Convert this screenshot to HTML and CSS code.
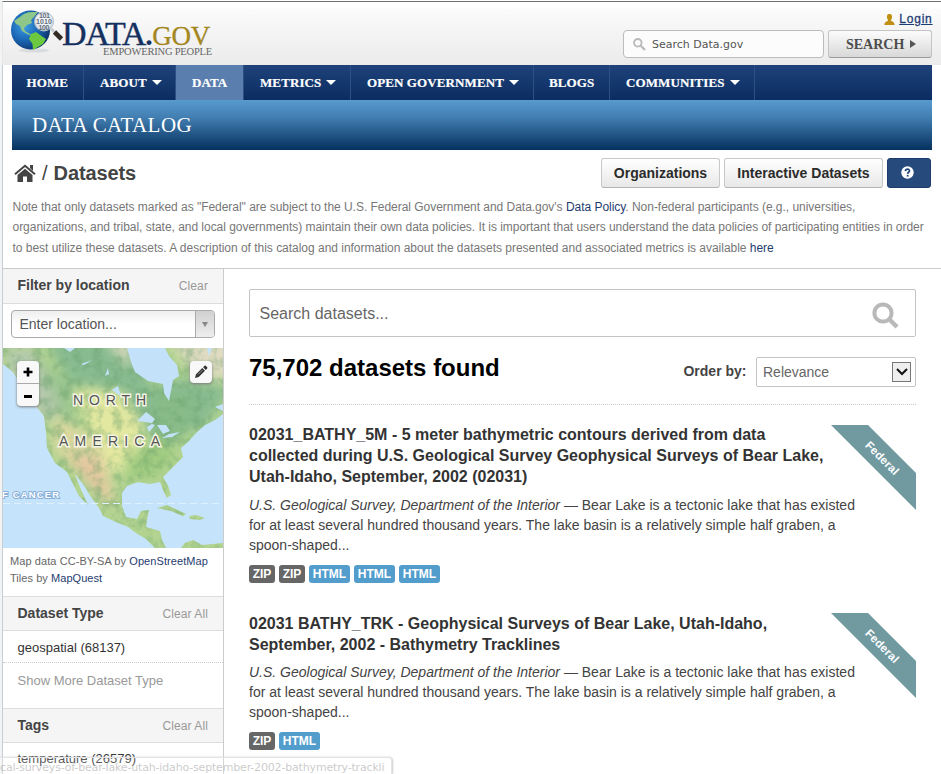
FILE: index.html
```html
<!DOCTYPE html>
<html lang="en">
<head>
<meta charset="utf-8">
<title>Data.gov - Datasets</title>
<link rel="stylesheet" href="styles.css">
</head>
<body>
<div class="page">
  <header class="masthead">
    <div class="logo">
      <svg class="globe" width="54" height="48" viewBox="0 0 54 48">
        <defs>
          <radialGradient id="sea" cx=".35" cy=".4" r=".7"><stop offset="0" stop-color="#3f9fe0"/><stop offset=".5" stop-color="#1b69b8"/><stop offset="1" stop-color="#0a2f63"/></radialGradient>
          <radialGradient id="lens" cx=".5" cy=".45" r=".6"><stop offset="0" stop-color="#ffffff"/><stop offset=".7" stop-color="#e3eaf0"/><stop offset="1" stop-color="#aebbc8"/></radialGradient>
        </defs>
        <ellipse cx="24" cy="41.500" rx="15" ry="2" fill="#d9dcdf"/>
        <circle cx="20.500" cy="21" r="19.500" fill="url(#sea)"/>
        <path d="M10 8 Q15 3 22 3 L28 3 L24 8 L21 11 L22 14 L17 16 L14 19 L15 22 L20 25 L22 27 L17 25 L12 22 L10 17 L6 15 L4 12 Z" fill="#8fc78a"/>
        <path d="M21 25 L26 23 L33 28 L36 30 L33 35 L28 38 L23 41 L22.500 35 L19 30 Z" fill="#6cc83e"/>
        <circle cx="34" cy="12.500" r="9.500" fill="url(#lens)" stroke="#b4bec8" stroke-width="1"/>
        <text x="29" y="8.500" class="bits" textLength="11">101</text><text x="26" y="14.800" class="bits" textLength="16">1010</text><text x="28.500" y="21" class="bits" textLength="11">100</text>
        <path d="M41 19.500 L45 23.500" stroke="#c9ced3" stroke-width="2.500"/>
        <path d="M44.500 23 L51.500 30" stroke="#332c27" stroke-width="4.600"/>
      </svg>
      <div class="wordmark">
        <div class="brand"><span class="brand-data">DATA</span><span class="brand-gov"><b>.</b>GOV</span></div>
        <div class="tagline">EMPOWERING PEOPLE</div>
      </div>
    </div>
    <div class="tools">
      <div class="login"><svg width="11" height="11" viewBox="0 0 11 11"><path d="M5.500 0C8 0 8.200 2 8 3.800 7.800 5.200 7 5.700 7 6.300 7 7.500 10.600 7.300 10.600 11H.4C.4 7.300 4 7.500 4 6.300 4 5.700 3.200 5.200 3 3.800 2.800 2 3 0 5.500 0Z" fill="#c09012"/></svg><a href="#">Login</a></div>
      <div class="site-search">
        <div class="site-input"><svg width="13" height="13" viewBox="0 0 13 13"><circle cx="4.800" cy="4.800" r="3.800" fill="none" stroke="#b9b9b9" stroke-width="1.800"/><path d="M7.800 7.800 L12 12" stroke="#b9b9b9" stroke-width="2.200"/></svg><span>Search Data.gov</span></div>
        <div class="site-button"><span>SEARCH</span><i></i></div>
      </div>
    </div>
  </header>
  <nav class="nav">
    <div class="item home"><span>HOME</span></div>
    <div class="item about"><span>ABOUT</span><i></i></div>
    <div class="item active"><span>DATA</span></div>
    <div class="item metrics"><span>METRICS</span><i></i></div>
    <div class="item open"><span>OPEN GOVERNMENT</span><i></i></div>
    <div class="item blogs"><span>BLOGS</span></div>
    <div class="item comm"><span>COMMUNITIES</span><i></i></div>
  </nav>
  <div class="banner"><span>DATA CATALOG</span></div>
  <div class="toolbar">
    <svg class="house" width="22" height="18" viewBox="0 0 22 18"><path d="M16 1h3v6l-3-3Z M11 4.800 18.500 11v7H13v-5.500H9V18H3.500v-7Z" fill="#444"/><path d="M1 10.200 11 1.800 21 10.200" fill="none" stroke="#444" stroke-width="2"/></svg>
    <span class="slash">/</span><span class="crumb">Datasets</span>
    <div class="actions">
      <a class="btn orgs">Organizations</a><a class="btn inter">Interactive Datasets</a><a class="btn help"><svg width="13" height="13" viewBox="0 0 13 13"><circle cx="6.500" cy="6.500" r="6.200" fill="#fff"/><path d="M4.400 5.100C4.500 2.300 8.700 2.500 8.500 4.900 8.400 6.300 6.700 6.200 6.600 7.900" fill="none" stroke="#274a7d" stroke-width="1.700"/><rect x="5.700" y="8.900" width="1.800" height="1.700" fill="#274a7d"/></svg></a>
    </div>
  </div>
  <div class="note">
    <div class="n1">Note that only datasets marked as "Federal" are subject to the U.S. Federal Government and Data.gov's <a>Data Policy</a>. Non-federal participants (e.g., universities,</div>
    <div class="n2">organizations, and tribal, state, and local governments) maintain their own data policies. It is important that users understand the data policies of participating entities in order</div>
    <div class="n3">to best utilize these datasets. A description of this catalog and information about the datasets presented and associated metrics is available <a>here</a></div>
  </div>
  <div class="columns">
    <aside class="side">
      <div class="head first"><b>Filter by location</b><span>Clear</span></div>
      <div class="loc"><div class="combo"><span>Enter location...</span><div class="drop"><i></i></div></div></div>
      <div class="map">
        <svg width="220" height="200" viewBox="0 0 220 200">
          <defs>
            <filter id="soft" x="-20%" y="-20%" width="140%" height="140%" color-interpolation-filters="sRGB"><feGaussianBlur stdDeviation="6"/></filter>
            <filter id="edge" color-interpolation-filters="sRGB"><feGaussianBlur stdDeviation=".6"/></filter>
            <filter id="relief" x="0" y="0" width="100%" height="100%" color-interpolation-filters="sRGB"><feTurbulence type="fractalNoise" baseFrequency=".1" numOctaves="4" seed="4"/><feColorMatrix values="0 0 0 0 .4  0 0 0 0 .62  0 0 0 0 .42  3 0 0 0 -1.3"/></filter>
            <clipPath id="landclip"><path d="M0 0H220V66L212 72 202 77 193 85 185 94 178 100 180 109 170 119 160 129 165 138 168 147 164 150 160 142 157 134 147 136 135 134 124 138 119 145 119 158 123 169 134 171 138 163 146 162 144 172 143 179 157 183 159 192 163 200H152L143 191 133 185 125 179 113 174 100 168 96 160 88 149 80 136 72 126 76 137 85 157 76 148 69 134 64 124 52 115 44 100 43 84 41 68 33 58 22 42 10 24 0 16Z M178 200 182 195 190 192 199 197 220 195V200Z M154 160 164 157 183 166 180 168 168 163Z M186 168 193 167 202 170 197 172 187 171Z"/></clipPath>
          </defs>
          <rect width="220" height="200" fill="#c5e4fb"/>
          <g filter="url(#edge)"><g clip-path="url(#landclip)">
            <rect width="220" height="200" fill="#b3d491"/>
            <g filter="url(#soft)">
              <path d="M0 0H30L50 30 60 60 45 75 10 35Z" fill="#b5c9ac"/>
              <path d="M40 -10H130L150 40 175 30 230 40 200 80 150 90 128 65 118 42 70 38Z" fill="#88bb90"/>
              <path d="M35 10 70 38 72 85 58 62Z" fill="#98c38e"/>
              <path d="M150 40 195 50 180 90 160 100 150 72Z" fill="#88bb88"/>
              <path d="M70 38 118 44 142 78 128 125 100 122 85 75Z" fill="#e3e8a0"/>
              <path d="M124 108 160 92 172 108 150 130 122 132Z" fill="#a0cb80"/>
              <path d="M50 68 72 78 98 98 114 155 92 140 72 112 52 105Z" fill="#ddd8a0"/>
              <path d="M62 108 95 108 110 160 90 140Z" fill="#e4c69f"/>
              <path d="M165 -10H230V30H195Z" fill="#dfdbc2"/>
              <path d="M102 -8H126L128 22Z" fill="#dbdabd"/>
            </g>
            <rect width="220" height="200" filter="url(#relief)" opacity=".4"/>
            <path d="M124 0H162L166 8 174 17 176 28 170 32 168 43 166 53 161 45 160 36 145 33 132 24 128 14Z M61 0h11l-5 4Z M78 16l11-4-8 5Z M102 28l3-8 1 6Z M109 42l6-4 3 10-5-3Z M134 73l9-9 9 7-3 4-7-1Z M146 84l-2-5 5-3 3 1Z M154 77l9 0 4 6-7 3Z M159 90l7-4 11-2-8 5Z M204 0h5l-3 8Z M212 59l8-3v7Z" fill="#c3e2fa"/>
          </g></g>
          <path d="M0 155.500H220" stroke="#dff0fe" stroke-width="1" stroke-dasharray="7 4"/>
          <text x="70" y="57" class="region" textLength="73">NORTH</text>
          <text x="56" y="97.500" class="region" textLength="101">AMERICA</text>
          <text x="-1" y="150" class="tropic" textLength="57">F CANCER</text>
        </svg>
        <div class="zoom"><div class="plus"><svg width="10" height="10" viewBox="0 0 10 10"><path d="M5 .5v9M.5 5h9" stroke="#000" stroke-width="2.600"/></svg></div><div class="minus"><svg width="8" height="3" viewBox="0 0 8 3"><path d="M0 1.500h8" stroke="#000" stroke-width="3"/></svg></div></div>
        <div class="pen"><svg width="14" height="14" viewBox="0 0 14 14"><path d="M1 13 2 9.300 8.300 3 11 5.700 4.700 12Z M9.100 2.200 10.600.8Q11.200.3 11.800.8L13.200 2.200Q13.700 2.800 13.200 3.400L11.800 4.900Z" fill="#333"/><path d="M4 9.500 8.500 5" stroke="#aaa" stroke-width=".8"/></svg></div>
      </div>
      <div class="credit"><span class="c1">Map data CC-BY-SA by <a>OpenStreetMap</a></span><br><span class="c2">Tiles by <a>MapQuest</a></span></div>
      <div class="head"><b>Dataset Type</b><span>Clear All</span></div>
      <div class="facet">geospatial (68137)</div>
      <div class="more">Show More Dataset Type</div>
      <div class="head"><b>Tags</b><span>Clear All</span></div>
      <div class="facet last">temperature (26579)</div>
    </aside>
    <main class="main">
      <div class="search"><span>Search datasets...</span><svg width="27" height="27" viewBox="0 0 27 27"><circle cx="11" cy="11" r="8.600" fill="none" stroke="#b9b9b9" stroke-width="4"/><path d="M17 17 25 25" stroke="#b9b9b9" stroke-width="4.500"/></svg></div>
      <div class="summary"><h1>75,702 datasets found</h1><label>Order by:</label><div class="select"><span>Relevance</span><div class="chev"><svg width="12" height="8" viewBox="0 0 12 8"><path d="M1 1 6 6 11 1" fill="none" stroke="#111" stroke-width="2"/></svg></div></div></div>
      <article class="result">
        <div class="text">
          <h2>02031_BATHY_5M - 5 meter bathymetric contours derived from data<br>collected during U.S. Geological Survey Geophysical Surveys of Bear Lake,<br>Utah-Idaho, September, 2002 (02031)</h2>
          <p><em>U.S. Geological Survey, Department of the Interior</em> — Bear Lake is a tectonic lake that has existed<br>for at least several hundred thousand years. The lake basin is a relatively simple half graben, a<br>spoon-shaped...</p>
          <div class="tags"><span class="zip">ZIP</span><span class="zip">ZIP</span><span class="html">HTML</span><span class="html">HTML</span><span class="html">HTML</span></div>
        </div>
        <svg class="ribbon" width="86" height="86" viewBox="0 0 86 86"><path d="M1 0H38L86 48V85Z" fill="#7199a0"/><text x="0" y="0" transform="translate(34.500 21) rotate(45)" textLength="42">Federal</text></svg>
      </article>
      <article class="result second">
        <div class="text">
          <h2>02031 BATHY_TRK - Geophysical Surveys of Bear Lake, Utah-Idaho,<br>September, 2002 - Bathymetry Tracklines</h2>
          <p><em>U.S. Geological Survey, Department of the Interior</em> — Bear Lake is a tectonic lake that has existed<br>for at least several hundred thousand years. The lake basin is a relatively simple half graben, a<br>spoon-shaped...</p>
          <div class="tags"><span class="zip">ZIP</span><span class="html">HTML</span></div>
        </div>
        <svg class="ribbon" width="86" height="86" viewBox="0 0 86 86"><path d="M1 0H38L86 48V85Z" fill="#7199a0"/><text x="0" y="0" transform="translate(34.500 21) rotate(45)" textLength="42">Federal</text></svg>
      </article>
    </main>
  </div>
</div>
<div class="status">cal-surveys-of-bear-lake-utah-idaho-september-2002-bathymetry-trackli</div>
</body>
</html>
```
FILE: styles.css
```css
* { box-sizing: border-box; }
body { margin: 0; height: 774px; overflow: hidden; background: #fff; color: #444; font: 14px/20px "Liberation Sans", Arial, sans-serif; position: relative; white-space: nowrap; }
a { color: #1f3c70; text-decoration: none; }
.page { height: 774px; overflow: hidden; border-top: 1px solid #fff; border-left: 2px solid #f1f3f4; }
.page > * { border-left: 1px solid #c9cdd1; }
.masthead { height: 64px; border-top: 1px solid #707274; border-left-color: #e4e6e8; padding-left: 7px; padding-right: 9px; display: flex; justify-content: space-between; background: linear-gradient(#fff 5px, #fbfbfb 8px, #ebebeb 62px); }
.logo { display: flex; padding-top: 7px; }
.wordmark { width: 150px; margin-left: -2px; font-family: "Liberation Serif", serif; }
.brand { height: 29px; margin-top: 8px; font-size: 34px; line-height: 34px; color: #14305f; display: flex; }
.brand-data { letter-spacing: -1.200px; -webkit-text-stroke: .4px #14305f; }
.brand-gov { color: #a3871e; font-size: 27px; line-height: 36px; letter-spacing: -.300px; -webkit-text-stroke: .3px #a3871e; }
.brand-gov b { color: #14305f; font-size: 30px; -webkit-text-stroke: 0; }
.tagline { text-align: right; font-size: 10.500px; line-height: 12px; color: #666; letter-spacing: -.200px; }
.bits { font: bold 7px "Liberation Sans", sans-serif; fill: #5f6d7a; }
.tools { width: 309px; padding-top: 8px; }
.login { display: flex; justify-content: flex-end; align-items: center; gap: 4px; height: 18px; font-size: 12px; }
.login a { text-decoration: underline; color: #1d3c74; -webkit-text-stroke: .3px #1d3c74; letter-spacing: .8px; margin-right: -.6px; }
.site-search { display: flex; justify-content: space-between; margin-top: 2px; }
.site-input { width: 201px; height: 28px; border: 1px solid #bcbcbc; border-radius: 4px; background: #fcfcfc; display: flex; align-items: center; gap: 6px; padding-left: 9px; font: 11px/26px "DejaVu Sans", sans-serif; color: #555; }
.site-input span { margin-top: 2px; }
.site-button { width: 104px; height: 28px; border: 1px solid #c4c4c4; border-bottom-color: #999; border-radius: 3px; background: linear-gradient(#fcfcfc, #d8d8d8); display: flex; align-items: center; padding-left: 17px; gap: 6px; font: bold 14px/26px "Liberation Serif", serif; color: #4c4c4c; }
.site-button span { padding-top: 2px; }
.site-button i { border: 4px solid transparent; border-left: 6px solid #555; border-right: 0; }
.nav { height: 35px; padding-left: 9px; padding-right: 9px; display: flex; background: linear-gradient(#1e437a, #0b2c61) content-box; }
.item { display: flex; align-items: center; gap: 5px; border-right: 1px solid #2d4f84; font: bold 13px/35px "Liberation Serif", serif; color: #fff; padding-left: 16px; -webkit-text-stroke: .2px #fff; letter-spacing: .1px; }
.item i { border: 5px solid transparent; border-top-color: #fff; border-bottom: 0; }
.home { width: 72px; padding-left: 14.500px; }
.about { width: 92px; }
.active { width: 68px; background: #5a7fae; }
.metrics { width: 107px; }
.open { width: 183px; }
.blogs { width: 76px; padding-left: 15px; }
.comm { width: 145px; }
.banner { height: 50px; padding: 0 9px; background: linear-gradient(#589ace, #427eb1 35%, #05315f) content-box; color: #fff; font: 21px/50px "Liberation Serif", serif; }
.banner span { margin-left: 20px; letter-spacing: .45px; }
.toolbar { height: 47px; display: flex; align-items: center; padding: 0 10px 2px 12px; }
.house { margin-left: -1px; }
.slash { margin-left: 6px; font-size: 20px; }
.crumb { margin-left: 6px; font-size: 20px; font-weight: bold; letter-spacing: -.1px; }
.actions { display: flex; gap: 4px; margin-left: auto; }
.btn { height: 30px; border: 1px solid #c8c8c8; border-bottom-color: #b3b3b3; border-radius: 3px; background: linear-gradient(#fff, #e8e8e8); color: #2b2b2b; font-weight: bold; line-height: 29px; text-align: center; }
.orgs { width: 119px; }
.inter { width: 159px; }
.help { width: 44px; background: #274a7d; border-color: #1d3d6c; display: flex; align-items: center; justify-content: center; }
.help svg { margin-right: 3px; }
.note { height: 71px; padding-left: 9.500px; font-size: 12px; line-height: 20.400px; color: #777; }
.n1 { letter-spacing: -.03px; }
.n2 { letter-spacing: -.033px; }
.n3 { letter-spacing: -.022px; }
.columns { display: flex; height: 506px; border-top: 1px solid #c9cbcd; }
.side { width: 221px; border-right: 1px solid #ccc; }
.head { height: 35px; background: #f5f5f5; border-top: 1px solid #ddd; border-bottom: 1px solid #ddd; display: flex; justify-content: space-between; padding: 0 15px 0 14.500px; line-height: 33px; }
.first { border-top: 0; }
.head span { font-size: 12px; line-height: 35px; color: #999; letter-spacing: .1px; }
.loc { height: 44px; padding: 6px 8px; }
.combo { width: 204px; height: 28px; border: 1px solid #aaa; border-radius: 4px; background: linear-gradient(#eee, #fff 50%); display: flex; justify-content: space-between; line-height: 27px; padding-left: 7.500px; color: #555; overflow: hidden; }
.drop { width: 19px; border-left: 1px solid #aaa; background: linear-gradient(#d0d0d0, #eee); display: flex; align-items: center; justify-content: center; }
.drop i { border: 3px solid transparent; border-top: 5px solid #888; border-bottom: 0; }
.map { height: 200px; position: relative; overflow: hidden; }
.map > svg { display: block; }
.region { font: 14px "Liberation Sans", sans-serif; fill: #555; stroke: #f4f5e2; stroke-width: 3px; paint-order: stroke; }
.tropic { font: bold 9.500px "Liberation Sans", sans-serif; fill: #fff; stroke: #89b0d9; stroke-width: 2px; paint-order: stroke; }
.zoom { position: absolute; left: 14px; top: 13px; width: 22px; height: 45px; background: #f8f8f8; border-radius: 4px; box-shadow: 0 1px 3px #777; }
.zoom div { display: flex; align-items: center; justify-content: center; height: 22px; }
.zoom .plus { height: 23px; border-bottom: 1px solid #aaa; }
.minus { padding-top: 3px; }
.pen { position: absolute; left: 187px; top: 13px; width: 22px; height: 22px; background: #f8f8f8; border-radius: 4px; box-shadow: 0 1px 3px #777; display: flex; align-items: center; justify-content: center; }
.credit { height: 48px; padding: 5px 7px 0; font-size: 11px; line-height: 17px; color: #666; }
.c1 { letter-spacing: .08px; }
.c2 { letter-spacing: .05px; }
.facet { height: 32px; padding-left: 14.500px; line-height: 34px; font-size: 13px; color: #333; border-bottom: 1px dotted #ccc; }
.last { line-height: 32px; }
.more { height: 45px; padding-left: 14.500px; line-height: 35px; font-size: 13px; color: #999; }
.main { padding-left: 25px; padding-top: 20px; width: 692px; }
.search { height: 48px; border: 1px solid #c4c4c4; border-radius: 2px; display: flex; justify-content: space-between; align-items: center; padding: 0 16px 0 9.500px; font-size: 16px; color: #666; }
.search span { margin-top: 2px; }
.search svg { margin-top: 4px; }
.summary { height: 68px; border-bottom: 1px dotted #ccc; display: flex; align-items: center; }
h1 { margin: -6px auto 0 0; font-size: 24px; color: #000; }
label { font-weight: bold; margin-right: 9.500px; }
.select { width: 160px; height: 30px; border: 1px solid #c4c4c4; border-radius: 2px; display: flex; align-items: center; justify-content: space-between; padding: 0 4px 0 6px; margin-top: 2px; color: #666; }
.chev { width: 19px; height: 20px; border: 1px solid #777; background: #eee; display: flex; align-items: center; justify-content: center; }
.result { display: flex; height: 188px; padding-top: 19px; }
.second { padding-top: 20px; }
.text { width: 582px; flex: none; }
h2 { margin: 0; font-size: 16px; line-height: 21px; color: #333; }
p { margin: 8px 0 10px; color: #444; }
.second p { margin: 7px 0 10px; }
.tags { display: flex; gap: 4px; }
.tags span { width: 26px; text-align: center; height: 18px; border-radius: 3px; font-size: 12px; font-weight: bold; line-height: 18px; color: #fff; }
.tags .zip { background: #666; }
.tags .html { width: 41px; background: #529dcc; }
.ribbon { flex: none; margin-left: -1px; margin-top: 1px; }
.second .ribbon { margin-top: 0; }
.ribbon text { font: bold 11.500px "Liberation Sans", sans-serif; fill: #fff; }
.status { position: absolute; left: 0; top: 757px; width: 392px; height: 17px; border: 1px solid #e4e4e4; border-left: 0; border-bottom: 0; background: rgba(255,255,255,.2); border-radius: 0 4px 0 0; color: rgba(150,150,150,.5); font: 11px/19px "DejaVu Sans", sans-serif; letter-spacing: -.17px; box-shadow: 1px 0 2px #ccc; }
```
